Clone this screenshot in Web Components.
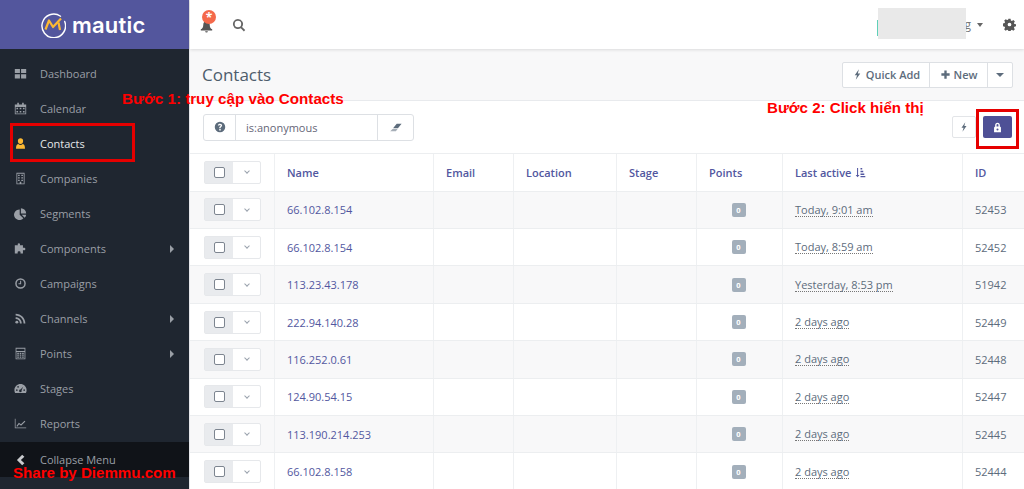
<!DOCTYPE html>
<html>
<head>
<meta charset="utf-8">
<title>Contacts | Mautic</title>
<style>
  html, body { margin: 0; height: 489px; overflow: hidden; background: #fff; }
  body { font-family: "Open Sans", sans-serif; font-size: 11px; color: #5d6c7c; }
</style>
</head>
<body>
<mautic-app></mautic-app>

<script>
// Icons are hand drawn on a 16x16 box
const ICONS = {
  dashboard: '<path d="M1 2.500h6.300v5H1zM8.700 2.500H15v5H8.700zM1 9h6.300v5H1zM8.700 9H15v5H8.700z"/>',
  calendar: '<path fill-rule="evenodd" d="M1 3h3V1h2v2h4V1h2v2h3v12H1zM2 6v8h12V6z"/><path d="M3 7h2v2H3zM7 7h2v2H7zM11 7h2v2h-2zM3 11h2v2H3zM7 11h2v2H7zM11 11h2v2h-2z"/>',
  user: '<path d="M8 1.500a3.200 3.200 0 0 1 3.200 3.700c0 1.800-1.100 3.300-3.200 3.300S4.800 7 4.800 5.200A3.200 3.200 0 0 1 8 1.500zM5.300 8.500C6 9.300 7 9.700 8 9.700s2-.4 2.700-1.200C13 8.800 13.500 10.800 13.500 14.500h-11c0-3.700.5-5.700 2.800-6z"/>',
  building: '<path fill-rule="evenodd" d="M3 1h10v14H3zM4 2v12h3v-2h2v2h3V2z"/><path d="M5 3.500h2v1.500H5zM9 3.500h2v1.500H9zM5 6.500h2V8H5zM9 6.500h2V8H9zM5 9.500h2V11H5zM9 9.500h2V11H9z"/>',
  pie: '<path d="M7 3v6.500l4.500 4.200A6.500 6.500 0 1 1 7 3zM8.500 1.500a6.500 6.500 0 0 1 6.500 6.500H8.500zM9.500 9.500H15a6.500 6.500 0 0 1-1.900 3.700z"/>',
  puzzle: '<path d="M6 1.500c1.300 0 1.800 1 1.200 2.500H11v3.200c1.500-.6 3-.2 3 1.300s-1.500 1.900-3 1.300V14H8V12.500C8 11 4.500 11 4.500 12.500V14H1V4h3.800C4.200 2.500 4.700 1.500 6 1.500z"/>',
  clock: '<path fill-rule="evenodd" d="M8 1.500a6.500 6.500 0 1 1 0 13 6.500 6.500 0 0 1 0-13zm0 1.800a4.700 4.700 0 1 0 0 9.400 4.700 4.700 0 0 0 0-9.400z"/><path d="M7.500 4.500h1.300v4.300H5.500V7.600h2z"/>',
  rss: '<circle cx="3.500" cy="12.500" r="1.800"/><path d="M2 6.500c4.200 0 7.500 3.300 7.500 7.500H7.300C7.300 11 5 8.700 2 8.700zM2 2c6.600 0 12 5.400 12 12h-2.200C11.800 8.600 7.400 4.200 2 4.200z"/>',
  calculator: '<path fill-rule="evenodd" d="M2 1h12v14H2zM3 2v3h10V2zM3 6v8h10V6z"/><path d="M4 7h2v1.500H4zM7 7h2v1.500H7zM10 7h2v1.500h-2zM4 9.300h2v1.500H4zM7 9.300h2v1.500H7zM10 9.300h2v1.500h-2zM4 11.600h2v1.500H4zM7 11.600h2v1.500H7zM10 11.600h2v1.500h-2z"/>',
  gauge: '<path fill-rule="evenodd" d="M8 2.500c4 0 7.500 3.200 7.500 7.500 0 1.300-.3 2.500-.9 3.500H1.400C.8 12.500.5 11.300.5 10 .5 5.700 4 2.500 8 2.500zM3.500 9a1 1 0 1 0 0 2 1 1 0 0 0 0-2zm9 0a1 1 0 1 0 0 2 1 1 0 0 0 0-2zM5 5a1 1 0 1 0 0 2 1 1 0 0 0 0-2zm6.300.7L8 9.300a1.600 1.600 0 1 0 1.300.8z"/>',
  chart: '<path d="M1 2h.9v11H15v.9H1z"/><path d="M3 11l3-4 2.500 2L13 4.500l1 1-5.300 5.300L6.300 9l-2.300 3z"/>',
  left: '<path d="M10.500 2 13 4.300 9 8l4 3.700L10.500 14 4.500 8z"/>',
  bolt: '<path d="M10 .5 4 9h3.300L5.500 15.500 12 6.500H8.500z"/>',
  plus: '<path d="M6.300 2h3.400v4.300H14v3.400H9.700V14H6.300V9.700H2V6.300h4.300z"/>',
  question: '<path fill-rule="evenodd" d="M8 1a7 7 0 1 1 0 14A7 7 0 0 1 8 1zM7 10.800v2h2v-2zM8 3.500c-1.500 0-2.700.8-3 2.200l1.700.5c.2-.7.6-1 1.200-1 .6 0 1 .3 1 .8 0 1-2 1.300-2 3.200v.3h1.900c0-1.400 2-1.600 2-3.700 0-1.300-1.200-2.300-2.800-2.300z"/>',
  eraser: '<path d="M9.500 3.500H15.500L11 9H5z"/><path d="M4.400 9.700h6.100L8.500 12.500H1.500z" opacity=".55"/>',
  search: '<path fill-rule="evenodd" d="M6.800 1a5.800 5.800 0 0 1 4.700 9.200l3.600 3.600-1.500 1.500-3.600-3.600A5.800 5.800 0 1 1 6.800 1zm0 2.100a3.700 3.700 0 1 0 0 7.400 3.700 3.700 0 0 0 0-7.400z"/>',
  bell: '<path d="M8 1.500c2.800 0 4 2 4 4.500 0 3 1 4.500 3 5.500v1.500H1v-1.500C3 10.500 4 9 4 6c0-2.500 1.200-4.500 4-4.500zM6.300 13.800h3.400a1.700 1.700 0 0 1-3.400 0z"/>',
  gear: '<path fill-rule="evenodd" d="M6.700 1h2.600l.4 2 1.300.6 1.700-1.200 1.900 1.900-1.200 1.700.6 1.300 2 .4v2.600l-2 .4-.6 1.300 1.200 1.700-1.900 1.900-1.700-1.200-1.300.6-.4 2H6.700l-.4-2-1.300-.6-1.700 1.200-1.900-1.900 1.200-1.700-.6-1.300-2-.4V6.700l2-.4.6-1.300-1.200-1.700 1.900-1.900L5 2.600l1.300-.6zM8 5.700a2.300 2.300 0 1 0 0 4.600 2.300 2.300 0 0 0 0-4.600z"/>',
  lock: '<path fill-rule="evenodd" d="M8 1c2.100 0 3.400 1.500 3.400 3.500V6.700c1 .2 1.600.9 1.600 1.900V15H3V8.600c0-1 .6-1.700 1.600-1.900V4.500C4.600 2.500 5.900 1 8 1zM8 3c-.9 0-1.400.6-1.400 1.500v2.100h2.800V4.500C9.400 3.600 8.900 3 8 3zM8 9.300a1.500 1.500 0 1 0 0 3 1.500 1.500 0 0 0 0-3z"/>',
  sort: '<path d="M3 1.500h1.500v10H6.500L3.700 15 1 11.500h2zM8 1.500h2.500v2H8zM8 5.500h4v2H8zM8 9.500h5.500v2H8zM8 13h7v2H8z"/>',
};
const icon = (name, size, color) =>
  `<svg width="${size}" height="${size}" viewBox="0 0 16 16" fill="${color || "currentColor"}" style="display:block;flex:none">${ICONS[name]}</svg>`;

// One row of the left menu
class NavItem extends HTMLElement {
  connectedCallback() {
    const active = this.hasAttribute("active");
    this.attachShadow({ mode: "open" }).innerHTML = `
      <style>
        :host { display: flex; align-items: center; height: 35px; padding-left: 14px; padding-right: 15px; color: ${active ? "#e6e8ea" : "#9a9fa6"}; font-size: 11px; font-weight: ${active ? 500 : 400}; }
        .ic { width: 26px; flex: none; }
        .label { flex: 1; }
        .arrow { width: 0; height: 0; border-left: 4px solid #9a9fa6; border-top: 4px solid transparent; border-bottom: 4px solid transparent; }
      </style>
      <span class="ic">${icon(this.getAttribute("icon"), 13, active ? "#fdb933" : "#9a9fa6")}</span>
      <span class="label"><slot></slot></span>
      ${this.hasAttribute("sub") ? '<span class="arrow"></span>' : ""}
    `;
  }
}

class SideBar extends HTMLElement {
  constructor() {
    super();
    this.attachShadow({ mode: "open" }).innerHTML = `
      <style>
        :host { display: flex; flex-direction: column; width: 189px; flex: none; height: 489px; background: #1f2630; border-right: 1px solid #e6e7ea; }
        .brand { display: flex; align-items: center; gap: 6px; height: 49px; padding-left: 41px; background: #53569d; color: #fff; font-family: "Inter", sans-serif; font-size: 22px; font-weight: 600; letter-spacing: .2px; }
        nav { padding-top: 7px; flex: 1; }
        .collapse { display: flex; align-items: center; height: 35px; padding-left: 13px; margin-bottom: 12px; background: #101318; color: #9a9fa6; font-size: 11px; }
        .collapse span { width: 27px; flex: none; color: #c9cbce; }
      </style>
      <div class="brand">
        <svg width="25" height="26" viewBox="0 0 25 26" fill="none">
          <path d="M19.500 4.200A11.800 11.800 0 1 0 23.700 9.500" stroke="#fff" stroke-width="1.400" stroke-linecap="round"/>
          <path d="M4.500 17.500 8 8.500l4 6.500 8-8.500" stroke="#fdb933" stroke-width="2.200" stroke-linejoin="round"/>
          <path d="M17.500 10.500 19 18" stroke="#fdb933" stroke-width="2.200"/>
        </svg>
        mautic
      </div>
      <nav>
        <nav-item icon="dashboard">Dashboard</nav-item>
        <nav-item icon="calendar">Calendar</nav-item>
        <nav-item icon="user" active>Contacts</nav-item>
        <nav-item icon="building">Companies</nav-item>
        <nav-item icon="pie">Segments</nav-item>
        <nav-item icon="puzzle" sub>Components</nav-item>
        <nav-item icon="clock">Campaigns</nav-item>
        <nav-item icon="rss" sub>Channels</nav-item>
        <nav-item icon="calculator" sub>Points</nav-item>
        <nav-item icon="gauge">Stages</nav-item>
        <nav-item icon="chart">Reports</nav-item>
      </nav>
      <div class="collapse"><span>${icon("left", 14)}</span>Collapse Menu</div>
    `;
  }
}

class TopBar extends HTMLElement {
  constructor() {
    super();
    this.attachShadow({ mode: "open" }).innerHTML = `
      <style>
        :host { display: flex; align-items: center; height: 49px; flex: none; background: #fff; box-shadow: 0 1px 3px rgba(0,0,0,.12); position: relative; z-index: 1; padding: 0 8px 0 10px; color: #555; box-sizing: border-box; }
        .bell { position: relative; margin-right: 19px; margin-top: 3px; }
        .badge { position: absolute; left: 2px; top: -10px; width: 14px; height: 14px; border-radius: 50%; background: #f4694b; color: #fff; font-size: 12px; font-weight: 700; line-height: 16px; text-align: center; }
        .spacer { flex: 1; }
        .user { position: relative; display: flex; align-items: center; gap: 6px; margin-right: 20px; font-size: 12px; color: #777; }
        .caret { width: 0; height: 0; border-top: 4px solid #666; border-left: 3.500px solid transparent; border-right: 3.500px solid transparent; }
        .mask { position: absolute; right: 17px; top: -8px; width: 88px; height: 31px; background: #e9e9e9; }
        .mask::before { content: ""; position: absolute; left: -1px; top: 12px; width: 1px; height: 16px; background: #5fd0b8; }
      </style>
      <span class="bell">${icon("bell", 13)}<span class="badge">*</span></span>
      ${icon("search", 14, "#666")}
      <span class="spacer"></span>
      <span class="user">g<span class="caret"></span><span class="mask"></span></span>
      ${icon("gear", 13)}
    `;
  }
}

class PageHeader extends HTMLElement {
  constructor() {
    super();
    this.attachShadow({ mode: "open" }).innerHTML = `
      <style>
        :host { display: flex; align-items: center; justify-content: space-between; height: 52px; flex: none; padding: 0 11px 0 12px; background: #f8f8f9; border-bottom: 1px solid #e8eaed; box-sizing: border-box; }
        h1 { margin: 0; font-size: 17px; font-weight: 400; color: #4e5d6c; }
        .group { display: flex; height: 26px; border: 1px solid #dde0e4; border-radius: 2px; background: #fff; box-sizing: border-box; font-size: 11px; font-weight: 600; color: #5d6c7c; }
        .group span { display: flex; align-items: center; justify-content: center; gap: 3px; border-right: 1px solid #dde0e4; box-sizing: border-box; }
        .group span:last-child { border-right: 0; }
        .caret { width: 0; height: 0; border-top: 4px solid #5d6c7c; border-left: 4px solid transparent; border-right: 4px solid transparent; }
      </style>
      <h1>Contacts</h1>
      <div class="group">
        <span style="width:87px">${icon("bolt", 11)} Quick Add</span>
        <span style="width:58px">${icon("plus", 11)} New</span>
        <span style="width:24px"><i class="caret"></i></span>
      </div>
    `;
  }
}

class ListToolbar extends HTMLElement {
  constructor() {
    super();
    this.attachShadow({ mode: "open" }).innerHTML = `
      <style>
        :host { display: flex; align-items: center; justify-content: space-between; height: 53px; flex: none; padding: 0 12px 0 13px; background: #fff; border-bottom: 1px solid #eceef0; box-sizing: border-box; }
        .search { display: flex; height: 27px; width: 211px; border: 1px solid #dde0e4; border-radius: 3px; box-sizing: border-box; color: #5d6c7c; font-size: 11px; }
        .search > span { display: flex; align-items: center; justify-content: center; }
        .help { width: 31px; border-right: 1px solid #dde0e4; }
        .input { flex: 1; justify-content: flex-start !important; padding-left: 10px; color: #667; }
        .clear { width: 35px; border-left: 1px solid #dde0e4; }
        .tools { display: flex; gap: 7px; }
        .tools span { display: flex; align-items: center; justify-content: center; height: 22px; box-sizing: border-box; border-radius: 2px; }
        .flash { width: 24px; border: 1px solid #e3e5e8; color: #5d6c7c; }
        .on { width: 29px; background: #4e5096; color: #fff; }
      </style>
      <div class="search">
        <span class="help">${icon("question", 12)}</span>
        <span class="input">is:anonymous</span>
        <span class="clear">${icon("eraser", 13)}</span>
      </div>
      <div class="tools">
        <span class="flash">${icon("bolt", 10)}</span>
        <span class="on">${icon("lock", 11)}</span>
      </div>
    `;
  }
}

const COLS = "85px 159px 80px 103px 80px 86px 180px 61px";

// The tick box with its dropdown, used by the head and by each row
class RowPicker extends HTMLElement {
  constructor() {
    super();
    this.attachShadow({ mode: "open" }).innerHTML = `
      <style>
        :host { display: flex; width: 57px; height: 23px; border: 1px solid #e6e8eb; border-radius: 2px; box-sizing: border-box; background: #fff; }
        .box { display: flex; align-items: center; justify-content: center; width: 28px; background: #e9ebee; }
        .box i { width: 9px; height: 9px; background: #fff; border: 1px solid #7d8590; border-radius: 2px; }
        .drop { flex: 1; display: flex; align-items: center; justify-content: center; }
        .drop i { width: 3px; height: 3px; border-right: 1px solid #99a2ad; border-bottom: 1px solid #99a2ad; transform: rotate(45deg); margin-top: -2px; }
      </style>
      <span class="box"><i></i></span>
      <span class="drop"><i></i></span>
    `;
  }
}

class ContactRow extends HTMLElement {
  connectedCallback() {
    const date = this.getAttribute("date");
    this.attachShadow({ mode: "open" }).innerHTML = `
      <style>
        :host { display: grid; grid-template-columns: ${COLS}; height: 37.4px; box-sizing: border-box; border-bottom: 1px solid #eceef0; font-size: 11px; color: #5d6c7c; }
        :host([shade]) { background: #f8f8f9; }
        .cell { display: flex; align-items: center; padding-left: 12px; border-right: 1px solid #eef0f2; }
        .pick { padding-left: 14px; }
        .cell:last-child { border-right: 0; }
        .name { color: #5257a0; }
        .points { justify-content: center; padding-left: 0; padding-right: 2px; }
        .points b { display: block; width: 14px; height: 14px; border-radius: 2px; background: #a3afbb; color: #fff; font-size: 7.500px; line-height: 14px; text-align: center; }
        .date span { border-bottom: 1px dotted #777; line-height: 13px; }
      </style>
      <div class="cell pick"><row-picker></row-picker></div>
      <div class="cell name"><slot></slot></div>
      <div class="cell"></div>
      <div class="cell"></div>
      <div class="cell"></div>
      <div class="cell points"><b>0</b></div>
      <div class="cell date"><span>${date}</span></div>
      <div class="cell">${this.getAttribute("rid")}</div>
    `;
  }
}

class ContactsTable extends HTMLElement {
  constructor() {
    super();
    this.attachShadow({ mode: "open" }).innerHTML = `
      <style>
        :host { display: block; flex: 1; overflow: hidden; background: #fff; }
        .head { display: grid; grid-template-columns: ${COLS}; height: 37.7px; box-sizing: border-box; border-bottom: 1px solid #eceef0; font-size: 11px; font-weight: 600; color: #5257a0; }
        .head div { display: flex; align-items: center; gap: 4px; padding-left: 12px; border-right: 1px solid #eef0f2; }
        .head div:first-child { padding-left: 14px; }
        .head div:last-child { border-right: 0; }
      </style>
      <div class="head">
        <div><row-picker></row-picker></div>
        <div>Name</div><div>Email</div><div>Location</div><div>Stage</div>
        <div>Points</div><div>Last active ${icon("sort", 11)}</div><div>ID</div>
      </div>
      <slot></slot>
    `;
  }
}

// Red notes that were painted over the screenshot
class NoteLayer extends HTMLElement {
  constructor() {
    super();
    this.attachShadow({ mode: "open" }).innerHTML = `
      <style>
        :host { position: absolute; inset: 0; pointer-events: none; z-index: 5; font-family: "Liberation Sans", sans-serif; font-weight: 700; color: #f00; }
        div { position: absolute; white-space: nowrap; }
        .box { border: 3px solid #e60000; box-sizing: border-box; }
      </style>
      <div style="left:122px;top:90px;font-size:15.200px">Bước 1: truy cập vào Contacts</div>
      <div style="left:767px;top:99px;font-size:15.100px">Bước 2: Click hiển thị</div>
      <div style="left:13px;top:464px;font-size:15.100px">Share by Diemmu.com</div>
      <div class="box" style="left:10px;top:123px;width:125px;height:39px"></div>
      <div class="box" style="left:976px;top:109px;width:43px;height:40px"></div>
    `;
  }
}

class MauticApp extends HTMLElement {
  constructor() {
    super();
    const rows = [
      ["66.102.8.154", "Today, 9:01 am", "52453"],
      ["66.102.8.154", "Today, 8:59 am", "52452"],
      ["113.23.43.178", "Yesterday, 8:53 pm", "51942"],
      ["222.94.140.28", "2 days ago", "52449"],
      ["116.252.0.61", "2 days ago", "52448"],
      ["124.90.54.15", "2 days ago", "52447"],
      ["113.190.214.253", "2 days ago", "52445"],
      ["66.102.8.158", "2 days ago", "52444"],
    ];
    this.attachShadow({ mode: "open" }).innerHTML = `
      <style>
        :host { display: flex; position: relative; width: 1024px; height: 489px; overflow: hidden; }
        main { display: flex; flex-direction: column; flex: 1; min-width: 0; }
      </style>
      <side-bar></side-bar>
      <main>
        <top-bar></top-bar>
        <page-header></page-header>
        <list-toolbar></list-toolbar>
        <contacts-table>
          ${rows.map((r, i) => `<contact-row ${i % 2 === 0 ? "shade" : ""} date="${r[1]}" rid="${r[2]}">${r[0]}</contact-row>`).join("")}
        </contacts-table>
      </main>
      <note-layer></note-layer>
    `;
  }
}

customElements.define("nav-item", NavItem);
customElements.define("side-bar", SideBar);
customElements.define("top-bar", TopBar);
customElements.define("page-header", PageHeader);
customElements.define("list-toolbar", ListToolbar);
customElements.define("row-picker", RowPicker);
customElements.define("contact-row", ContactRow);
customElements.define("contacts-table", ContactsTable);
customElements.define("note-layer", NoteLayer);
customElements.define("mautic-app", MauticApp);
</script>
</body>
</html>
